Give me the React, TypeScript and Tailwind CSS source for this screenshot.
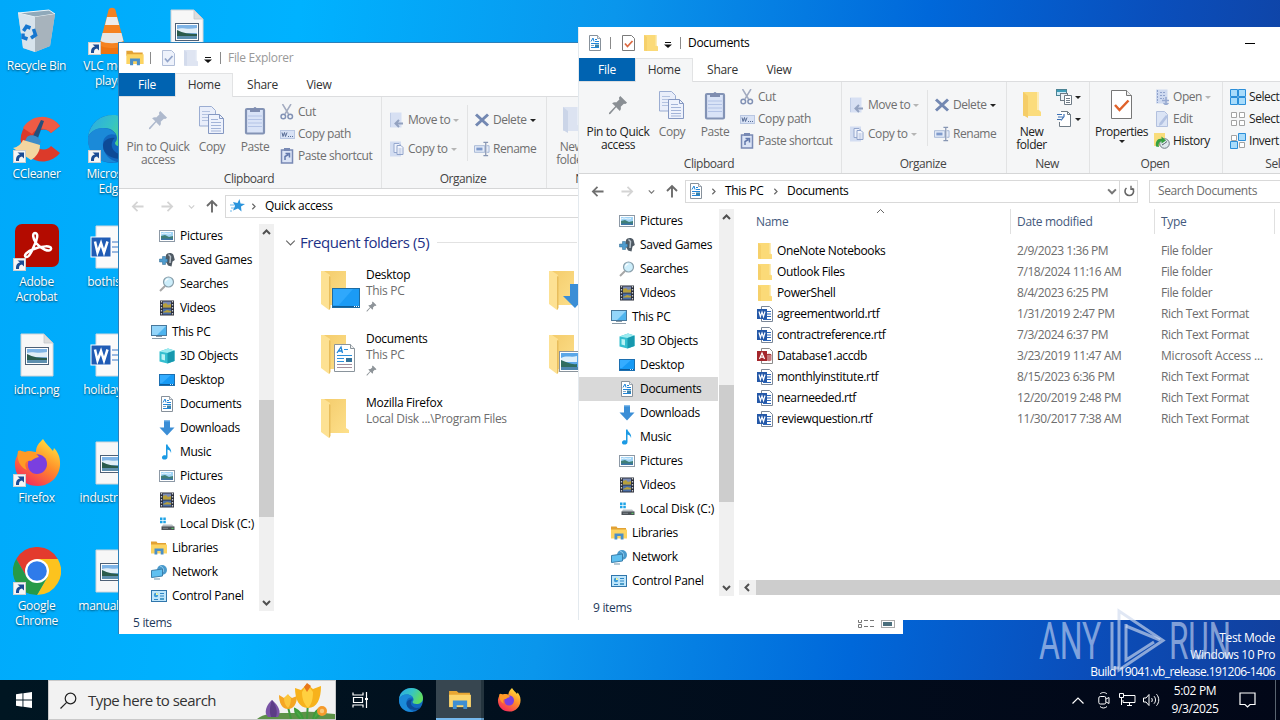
import type { ReactNode } from 'react'

type IconProps = { className?: string }

/* ── Small icons (16px grid) ── */

function PictureIcon() {
  return (
    <svg width="16" height="16" viewBox="0 0 16 16">
      <rect x=".5" y="2.500" width="15" height="11" fill="#fff" stroke="#8d99a6" />
      <rect x="2" y="4" width="12" height="8" fill="#9fd3f5" />
      <path d="M2 8l4-1 4 2 4-1v4H2z" fill="#3f7f78" />
      <path d="M2 10.500h12V12H2z" fill="#3d75a8" />
      <path d="M2 6l3-1 4 1 3-.5" stroke="#e9f6ff" fill="none" />
    </svg>
  )
}

function GamesIcon() {
  return (
    <svg width="16" height="16" viewBox="0 0 16 16">
      <path d="M7 3c1-2.500 6-2.800 7.500 0L15.800 8l-2.300 1.500-1 5-3.500-1L6.500 9z" fill="#4f5a64" />
      <path d="M9.500 2.500l2 2-.5 6.500" stroke="#b8c3cc" strokeWidth="1.500" fill="none" />
      <path d="M3.500 4.500h3v2.500H8.500v3H6.500v2.500h-3v-2.500H.5V7h3z" fill="#4f9cce" stroke="#2c668f" strokeWidth=".5" />
    </svg>
  )
}

function SearchesIcon() {
  return (
    <svg width="16" height="16" viewBox="0 0 16 16">
      <path d="M6 10l-5 5" stroke="#a7a7a7" strokeWidth="2" />
      <circle cx="9.500" cy="6" r="5" fill="#cdeefb" stroke="#8aa0ac" strokeWidth="1.200" />
      <path d="M6.500 5.500a3 3 0 0 1 3-2.500" stroke="#fff" strokeWidth="1.200" fill="none" />
    </svg>
  )
}

function VideoIcon() {
  return (
    <svg width="16" height="16" viewBox="0 0 16 16">
      <rect x="1" y=".5" width="14" height="15" fill="#2b2f3a" />
      <path d="M2.500 1v14M13.500 1v14" stroke="#c9ccd2" strokeWidth="1.300" strokeDasharray="1.500 1.500" />
      <rect x="4" y="1.500" width="8" height="6" fill="#7b8bb5" />
      <rect x="4" y="8.500" width="8" height="6" fill="#4a6fa8" />
      <path d="M4 4l3-1 2 2 3-1v3.500H4zM4 12l4-2 4 1v1.500H4z" fill="#b7a03c" />
    </svg>
  )
}

function PcIcon() {
  return (
    <svg width="16" height="16" viewBox="0 0 16 16">
      <rect x=".5" y="1.500" width="15" height="10" fill="#4fb4ee" stroke="#48789c" />
      <path d="M1 2h14L6 11H1z" fill="#93d5fa" />
      <path d="M5 12.500h6M1 14.500h14" stroke="#8a9ba8" />
    </svg>
  )
}

function ObjectsIcon() {
  return (
    <svg width="16" height="16" viewBox="0 0 16 16">
      <path d="M.5 3.500L9 .5l6.500 2v10.500l-7 2.500-8-2z" fill="#35bfd0" />
      <path d="M.5 3.500L9 .5l6.500 2-7 2.500z" fill="#9bebf0" />
      <path d="M8.500 5l7-2.500V13l-7 2.500z" fill="#1698ae" />
      <path d="M2.500 6l3.500.5v6l-3.500-1z" fill="#b9f3f5" />
    </svg>
  )
}

function DesktopIcon() {
  return (
    <svg width="16" height="16" viewBox="0 0 16 16">
      <rect x=".5" y="2.500" width="15" height="11" fill="#169af5" stroke="#1c6fb0" />
      <path d="M1 3h11l-9 8H1z" fill="#35adff" />
      <path d="M1 12.500h14" stroke="#0c5c9c" />
      <path d="M11 12.500h3" stroke="#cfeaff" strokeDasharray="1 1" />
    </svg>
  )
}

function DocumentIcon() {
  return (
    <svg width="16" height="16" viewBox="0 0 16 16">
      <path d="M2.500.5h8l3 3v12h-11z" fill="#fff" stroke="#87919b" />
      <path d="M10.500.5v3h3" fill="#e8ecef" stroke="#87919b" strokeWidth=".8" />
      <path d="M4 6.500L6 3l1 3.500M8 4.500h2M8 6.500h4M4 8.500h8M4 12.500h8" stroke="#2386d8" fill="none" />
      <path d="M4 10.500h3" stroke="#7fa7c8" />
      <rect x="8" y="9.500" width="4" height="2.500" fill="#3b82a8" />
    </svg>
  )
}

function DownloadIcon() {
  return (
    <svg width="16" height="16" viewBox="0 0 16 16">
      <path d="M5 .5h6v7h4.500L8 15.500.5 7.500H5z" fill="#3b8ed6" />
      <path d="M5 .5h6v1H5z" fill="#6db0e8" />
    </svg>
  )
}

function MusicIcon() {
  return (
    <svg width="16" height="16" viewBox="0 0 16 16">
      <path d="M7 .5h1.500c.5 3 4.500 4 3.500 8.500-.3-2-1.500-3-3.500-3.500V13c0 3.500-6 3.200-5.500.3C3.300 11.300 5.500 11 7 11.500z" fill="#1b9ae4" />
    </svg>
  )
}

function DiskIcon() {
  return (
    <svg width="16" height="16" viewBox="0 0 16 16">
      <path d="M1 1.500h2.500V4H1zM4.300 1.500h2.500V4H4.300zM1 4.800h2.500v2.500H1zM4.300 4.800h2.500v2.500H4.300z" fill="#1fa3e6" />
      <path d="M4 8.500h9l2.500 2.500H2.500z" fill="#b9bfc4" />
      <rect x="2.500" y="10.500" width="13" height="3.500" fill="#4c5257" />
      <path d="M4 12.300h5" stroke="#7d848a" />
      <path d="M12.500 12.300h2" stroke="#5ee06a" />
    </svg>
  )
}

function LibrariesIcon({ className }: IconProps) {
  return (
    <svg width="16" height="16" viewBox="0 0 16 16" className={className}>
      <path d="M0 1.500h5.500l1 1.500H15v3H0z" fill="#e2a234" />
      <path d="M0 4.500h16v9H0z" fill="#fcd462" />
      <path d="M3.500 14.500v-6h9v6h-2.800V11H6.300v3.500z" fill="#4a8fc8" />
    </svg>
  )
}

function NetworkIcon() {
  return (
    <svg width="16" height="16" viewBox="0 0 16 16">
      <circle cx="11" cy="6" r="5" fill="#4a9acc" />
      <path d="M9 2c3 1 4 3 3 6" stroke="#a7dcf7" fill="none" strokeWidth=".8" />
      <path d="M.5 6.500l11-1.500v7l-11 1.500z" fill="#5fc0f0" stroke="#3b7eaa" />
      <path d="M3 15h6" stroke="#6f94ab" />
    </svg>
  )
}

function ControlPanelIcon() {
  return (
    <svg width="16" height="16" viewBox="0 0 16 16">
      <rect x=".5" y="2.500" width="15" height="11" fill="#bfe6fb" stroke="#3076ac" />
      <circle cx="5" cy="7" r="2.200" fill="#3d9cd8" />
      <path d="M5 7V4.800A2.200 2.200 0 0 1 7.200 7z" fill="#f3f6a0" />
      <path d="M9 5.500h4M9 8h4M3 11.500h4" stroke="#2f86c4" />
      <rect x="9" y="10" width="4" height="2" fill="#4b9cc8" />
    </svg>
  )
}

function FolderIcon({ pale = false }: { pale?: boolean }) {
  return (
    <svg width="16" height="18" viewBox="0 0 16 18">
      <path d="M1 1h12.500v10.500l1.500 1V17H1z" fill={pale ? '#dfe5f2' : '#fbda78'} />
      <path d="M1 1l3 2v14l-3-1z" fill={pale ? '#d3dbec' : '#f6d06a'} />
      <path d="M12.500 1h1v11h-1z" fill={pale ? '#e6ebf5' : '#fce9ad'} />
    </svg>
  )
}

function WordFileIcon() {
  return (
    <svg width="17" height="16" viewBox="0 0 17 16">
      <path d="M4.500.5h8l3 3v12h-11z" fill="#fff" stroke="#7b8797" />
      <path d="M10 5.500h4M10 8h4M10 10.500h4M6 13.500h8" stroke="#2b65b8" />
      <rect y="3" width="10" height="10" fill="#2458a8" />
      <path d="M2 5.500l1.400 5L5 6l1.500 4.500 1.500-5" stroke="#fff" strokeWidth="1.200" fill="none" />
    </svg>
  )
}

function AccessFileIcon() {
  return (
    <svg width="17" height="16" viewBox="0 0 17 16">
      <path d="M4.500.5h8l3 3v12h-11z" fill="#fff" stroke="#8b8b8b" />
      <ellipse cx="12" cy="7" rx="2.500" ry="1.200" fill="#a4373a" />
      <path d="M9.500 7v5c0 1.500 5 1.500 5 0V7" fill="#c5777a" />
      <rect y="3" width="10" height="10" fill="#a4262c" />
      <path d="M2.500 11L5 5l2.500 6M3.500 9.200h3" stroke="#fff" strokeWidth="1.200" fill="none" />
    </svg>
  )
}

/* ── Ribbon icons ── */

function PinIcon({ size, color }: { size: number; color: string }) {
  return (
    <svg width={size} height={size} viewBox="0 0 22 22">
      <path d="M13.500 1l7.500 7.500-2 1.500-1.500-.5-3.500 3.500c.5 2 0 3.500-1 4.500L9 13.500 2.500 21 1 21.200 1.200 19.500 8 12.500 4.500 9c1.500-1 3-1.300 4.500-.8L12.500 5 12 3z" fill={color} />
    </svg>
  )
}

function CopyIcon() {
  return (
    <svg width="26" height="30" viewBox="0 0 26 30">
      <path d="M.5 1.500h12l4 4V21H.5z" fill="#e9eefa" stroke="#9badd2" />
      <path d="M3 6.500h8M3 9.500h11M3 12.500h11M3 15.500h11" stroke="#b3c2e0" />
      <path d="M9.500 9.500h11l4 4v15h-15z" fill="#eef2fc" stroke="#8598c2" />
      <path d="M20.500 9.500v4h4" fill="none" stroke="#8598c2" />
      <path d="M12 14.500h7M12 17.500h10M12 20.500h10M12 23.500h10M12 26h10" stroke="#a3b4d8" />
    </svg>
  )
}

function PasteIcon() {
  return (
    <svg width="22" height="30" viewBox="0 0 22 30">
      <rect x="2" y="4" width="18" height="24.500" rx="1" fill="#d9e3f7" stroke="#8393b5" strokeWidth="2.200" />
      <path d="M6 7V3.500h3.500a1.500 1.500 0 0 1 3 0H16V7z" fill="#7f8db0" />
      <path d="M4 11h14M4 14.500h14M4 18h14M4 21.500h14" stroke="#b3c3e6" />
    </svg>
  )
}

function CutIcon() {
  return (
    <svg width="16" height="16" viewBox="0 0 16 16" fill="none">
      <path d="M3.500 0l6 10M12 0L6 10" stroke="#a3abc0" strokeWidth="1.500" />
      <circle cx="4.300" cy="12.500" r="2.300" stroke="#8292b5" strokeWidth="1.500" />
      <circle cx="11.200" cy="12.500" r="2.300" stroke="#8292b5" strokeWidth="1.500" />
    </svg>
  )
}

function CopyPathIcon() {
  return (
    <svg width="15" height="9" viewBox="0 0 15 9">
      <rect x=".5" y=".5" width="14" height="8" fill="#d8e2f5" stroke="#b9c7e2" />
      <path d="M2 2.500l1 4 1.500-4 1 4 1.500-4M8 6.500h1M10 6.500h1M12 6.500h1" stroke="#586d96" fill="none" />
    </svg>
  )
}

function PasteShortcutIcon() {
  return (
    <svg width="16" height="16" viewBox="0 0 16 16">
      <rect x="2.500" y="2" width="11" height="13" fill="#dbe4f6" stroke="#7889b4" strokeWidth="1.500" />
      <rect x="5" y="0" width="6" height="3" fill="#7889b4" />
      <path d="M6 12V8.500l3.500-2M6.500 5.500h4v4" stroke="#6278ac" strokeWidth="1.500" fill="none" />
    </svg>
  )
}

function MoveToIcon() {
  return (
    <svg width="16" height="16" viewBox="0 0 16 16">
      <path d="M1 .5h11.500v15H1z" fill="#d7e0f3" />
      <path d="M1.500 1v14" stroke="#c0cde6" />
      <path d="M14 11.500H7M10 8l-3.500 3.500L10 15" stroke="#93a2c0" strokeWidth="2" fill="none" />
    </svg>
  )
}

function CopyToIcon() {
  return (
    <svg width="16" height="16" viewBox="0 0 16 16">
      <path d="M1 .5h11v15H1z" fill="#d3ddf1" />
      <path d="M5 2.500h5l1 1v8H5z" fill="#eef2fb" stroke="#96a8ce" />
      <path d="M8 4.500h4l2 2v7H8z" fill="#f3f6fd" stroke="#8fa2ca" />
      <path d="M9.500 8h3M9.500 10h3M9.500 12h3" stroke="#aab9da" />
    </svg>
  )
}

function DeleteIcon() {
  return (
    <svg width="16" height="16" viewBox="0 0 16 16">
      <path d="M2 2.500l12 11M14 2.500l-12 11" stroke="#7388b2" strokeWidth="3" />
    </svg>
  )
}

function RenameIcon() {
  return (
    <svg width="17" height="16" viewBox="0 0 17 16">
      <path d="M.5 4.500h11v7H.5zM13.500 4.500h2.500v7h-2.500" fill="#e4ebf8" stroke="#a4b5d4" />
      <rect x="2.500" y="6.500" width="6.500" height="3" fill="#7e9acb" />
      <path d="M10 1h5M12.500 1v14M10 15h5" stroke="#8796b3" strokeWidth="1.300" />
    </svg>
  )
}

function NewItemIcon({ muted }: { muted: boolean }) {
  const line = muted ? '#b6c2da' : '#6f7b86'
  return (
    <svg width="16" height="16" viewBox="0 0 16 16">
      <rect x=".5" y=".5" width="10" height="6" fill="#cfeaf7" stroke="#4d8394" />
      <path d="M1 2h9" stroke="#3e9db8" strokeWidth="2" />
      <rect x="4.500" y="4.500" width="7" height="7" fill="#eef3f6" stroke={line} />
      <path d="M8.500 6.500h7v9h-7z" fill="#fff" stroke={line} />
      <path d="M10 9.500h4M10 11.500h4M10 13.500h4" stroke={line} />
    </svg>
  )
}

function EasyAccessIcon() {
  return (
    <svg width="16" height="16" viewBox="0 0 16 16">
      <path d="M4 .5h8l2.500 3v12H4z" fill="#fff" />
      <path d="M5 .5h6.500l3 3v12h-11V11" fill="none" stroke="#6f7b86" />
      <path d="M11.500.5v3h3" fill="none" stroke="#6f7b86" />
      <path d="M1 8.500h4M2 6h5M1 3.500h5M8 3v2.500l-3 4" stroke="#3c70b4" strokeWidth="1.200" fill="none" />
    </svg>
  )
}

function PropertiesIcon() {
  return (
    <svg width="21" height="29" viewBox="0 0 21 29">
      <path d="M.5.500h15l5 5v23H.5z" fill="#fff" stroke="#777" />
      <path d="M15.500.5v5h5" fill="#eee" stroke="#777" />
      <path d="M4 15l4.500 5L17.500 10.500" stroke="#e0622a" strokeWidth="2.500" fill="none" />
    </svg>
  )
}

function OpenIcon() {
  return (
    <svg width="16" height="16" viewBox="0 0 16 16">
      <rect x="2" y=".5" width="11.500" height="14" fill="#cfdaf0" />
      <path d="M3.500 1v13M6 3.500h5M6 6.500h5M6 9.500h4" stroke="#8fa2cb" strokeDasharray="2 1" />
      <path d="M8 11.500h7M12 8v7.500M9.500 14l2.500 2 2.500-2" stroke="#96a9d0" strokeWidth="1.500" fill="none" />
    </svg>
  )
}

function EditIcon() {
  return (
    <svg width="16" height="16" viewBox="0 0 16 16">
      <path d="M2.500.5h8l3 3v12h-11z" fill="#dbe4f5" stroke="#b2c0de" />
      <path d="M14 5.500L8 13.500l-3 1.500.5-3L12 4z" fill="#b3c2e2" />
    </svg>
  )
}

function HistoryIcon() {
  return (
    <svg width="16" height="16" viewBox="0 0 16 16">
      <path d="M0 0h11v13H0z" fill="#f9dd7b" />
      <circle cx="10.500" cy="10.500" r="4.800" fill="#dfe9ed" stroke="#6d7b84" />
      <path d="M8 12l2.500-1.500L13 8.500" stroke="#546068" fill="none" />
      <path d="M2 13.500c-1-5 2-8.500 5.500-7.500V3.500l4.500 4-4.500 3V8.500c-2 0-3.500 2-2.500 5.500z" fill="#35a041" />
    </svg>
  )
}

function SelectIcon({ kind }: { kind: 'all' | 'none' | 'invert' }) {
  const on = { fill: '#a9dcfb', stroke: '#2c8fd9' }
  const off = { fill: '#fff', stroke: '#a3a3a3' }
  if (kind === 'all') {
    return (
      <svg width="16" height="16" viewBox="0 0 16 16">
        <path d="M.5.500h7v7h-7zM8.500.500h7v7h-7zM.5 8.500h7v7h-7zM8.500 8.500h7v7h-7z" {...on} />
      </svg>
    )
  }
  if (kind === 'none') {
    return (
      <svg width="16" height="16" viewBox="0 0 16 16">
        <path d="M1.500 1.500h5v5h-5zM9.500 1.500h5v5h-5zM1.500 9.500h5v5h-5zM9.500 9.500h5v5h-5z" {...off} />
      </svg>
    )
  }
  return (
    <svg width="16" height="16" viewBox="0 0 16 16">
      <path d="M1.500 2.500h5v5h-5zM9.500 9.500h5v5h-5z" {...off} />
      <path d="M8.500.500h7v7h-7zM.5 8.500h7v7h-7z" {...on} />
    </svg>
  )
}

function Caret({ color = '#222' }: { color?: string }) {
  return (
    <svg width="6" height="3" viewBox="0 0 6 3" className="shrink-0">
      <path d="M0 0h6L3 3z" fill={color} />
    </svg>
  )
}

function Chevron({ dir, color, size = 8, weight = 1.5 }: { dir: 'up' | 'down' | 'left' | 'right'; color: string; size?: number; weight?: number }) {
  const paths = { up: 'M1 6l3.500-3.500L8 6', down: 'M1 3l3.500 3.500L8 3', left: 'M6 1L2.500 4.500 6 8', right: 'M3 1l3.500 3.500L3 8' }
  return (
    <svg width={size} height={size} viewBox="0 0 9 9" className="shrink-0">
      <path d={paths[dir]} stroke={color} strokeWidth={weight} fill="none" />
    </svg>
  )
}

/* ── Ribbon ── */

function BigButton({ icon, lines, className, enabled = false, caret = false }: { icon: ReactNode; lines: string[]; className: string; enabled?: boolean; caret?: boolean }) {
  return (
    <div className={`flex shrink-0 flex-col items-center ${className} ${enabled ? 'text-[#222]' : 'text-[#6f6f6f]'}`}>
      <div className="flex h-[43px] items-center justify-center pt-[2px]">{icon}</div>
      {lines.map((line) => (
        <div key={line} className="h-[13px] leading-[13px] whitespace-nowrap">{line}</div>
      ))}
      {caret && <div className="pt-[2px]"><Caret /></div>}
    </div>
  )
}

function SmallButton({ icon, label, caret, enabled = false }: { icon: ReactNode; label?: string; caret?: string; enabled?: boolean }) {
  return (
    <div className={`flex h-[22px] items-center gap-[3px] whitespace-nowrap ${enabled ? 'text-[#222]' : 'text-[#6f6f6f]'}`}>
      <span className="flex w-4 shrink-0 justify-center">{icon}</span>
      {label && <span>{label}</span>}
      {caret && <Caret color={caret} />}
    </div>
  )
}

function Group({ label, className, children }: { label: string; className: string; children: ReactNode }) {
  return (
    <div className={`flex shrink-0 flex-col border-r border-[#e2e3e4] ${className}`}>
      <div className="flex h-[73px]">{children}</div>
      <div className="h-[18px] pr-[2px] text-center leading-[18px] text-[#444]">{label}</div>
    </div>
  )
}

function Ribbon({ active }: { active: boolean }) {
  return (
    <div className="flex h-[92px] shrink-0 overflow-hidden border-b border-[#d5d6d7] bg-[#f5f6f7] tracking-[-0.45px]">
      <Group label="Clipboard" className="w-[263px]">
        <BigButton className="ml-[2px] w-[74px] tracking-[-0.35px]" enabled={active} lines={['Pin to Quick', 'access']} icon={<PinIcon size={20} color={active ? '#8a8f94' : '#aeb9cd'} />} />
        <BigButton className="w-[34px]" lines={['Copy']} icon={<CopyIcon />} />
        <BigButton className="ml-[2px] w-[48px]" lines={['Paste']} icon={<PasteIcon />} />
        <div className="flex flex-col pt-1">
          <SmallButton icon={<CutIcon />} label="Cut" />
          <SmallButton icon={<CopyPathIcon />} label="Copy path" />
          <SmallButton icon={<PasteShortcutIcon />} label="Paste shortcut" />
        </div>
      </Group>
      <Group label="Organize" className="w-[165px]">
        <div className="flex w-[85px] flex-col gap-[7px] pt-3 pl-[7px]">
          <SmallButton icon={<MoveToIcon />} label="Move to" caret="#b5b5b5" />
          <SmallButton icon={<CopyToIcon />} label="Copy to" caret="#b5b5b5" />
        </div>
        <div className="mt-2 h-[56px] w-px bg-[#e2e3e4]" />
        <div className="flex flex-col gap-[7px] pt-3 pl-[6px]">
          <SmallButton icon={<DeleteIcon />} label="Delete" caret="#222" />
          <SmallButton icon={<RenameIcon />} label="Rename" />
        </div>
      </Group>
      <Group label="New" className="w-[83px]">
        <BigButton className="w-[49px]" enabled={active} lines={['New', 'folder']} icon={
          <svg width="20" height="28" viewBox="0 0 20 28">
            <path d="M1 1h16v18l2 2v4H1z" fill={active ? '#fbdc7c' : '#dce3f1'} />
            <path d="M1 1l5 4v22l-5-3z" fill={active ? '#f5cd68' : '#cbd5e8'} />
            <path d="M15 1h2v18h-2z" fill={active ? '#fdecb5' : '#e7ecf6'} />
          </svg>
        } />
        <div className="flex flex-col pt-1">
          <SmallButton icon={<NewItemIcon muted={!active} />} caret="#222" enabled />
          <SmallButton icon={<EasyAccessIcon />} caret="#222" enabled />
        </div>
      </Group>
      {active && (
        <>
          <Group label="Open" className="w-[133px]">
            <BigButton className="w-[63px] tracking-[-0.5px]" enabled caret lines={['Properties']} icon={<PropertiesIcon />} />
            <div className="flex flex-col pt-1 pl-px">
              <SmallButton icon={<OpenIcon />} label="Open" caret="#b5b5b5" />
              <SmallButton icon={<EditIcon />} label="Edit" />
              <SmallButton icon={<HistoryIcon />} label="History" enabled />
            </div>
          </Group>
          <Group label="Select" className="w-[118px]">
            <div className="flex flex-col pt-1 pl-[7px]">
              <SmallButton icon={<SelectIcon kind="all" />} label="Select all" enabled />
              <SmallButton icon={<SelectIcon kind="none" />} label="Select none" enabled />
              <SmallButton icon={<SelectIcon kind="invert" />} label="Invert selection" enabled />
            </div>
          </Group>
        </>
      )}
    </div>
  )
}

/* ── Window chrome ── */

function TitleBar({ title, active }: { title: string; active: boolean }) {
  return (
    <div className="flex h-[30px] shrink-0 items-center bg-white pl-2">
      {active ? <DocumentIcon /> : <LibrariesIcon className="scale-110" />}
      <div className="ml-[7px] h-3 w-px bg-[#8a8a8a]" />
      <svg width="13" height="16" viewBox="0 0 13 16" className="ml-[11px]">
        <path d="M.5.500h9l3 3v12H.5z" fill={active ? '#fff' : '#eef2fb'} stroke={active ? '#7a7a7a' : '#b1bed8'} />
        <path d="M3 8.500l2.500 3L10.500 6" stroke={active ? '#dc6a42' : '#93a5ca'} strokeWidth="1.800" fill="none" />
      </svg>
      <div className="ml-2"><FolderIcon pale={!active} /></div>
      <svg width="8" height="6" viewBox="0 0 8 6" className="mt-[3px] ml-[5px]">
        <path d="M1 .5h6" stroke="#111" />
        <path d="M0 2.500h8L4 6z" fill="#111" />
      </svg>
      <div className="ml-[8px] h-3 w-px bg-[#8a8a8a]" />
      <span className={`ml-[7px] w-[65px] whitespace-nowrap ${active ? 'text-black' : 'text-[#999]'}`}>{title}</span>
      {active && <div className="ml-[492px] h-px w-[10px] bg-black" />}
    </div>
  )
}

function Tabs() {
  return (
    <div className="flex h-[24px] shrink-0 border-b border-[#dcdddf] bg-white text-center leading-[24px] text-[#333]">
      <div className="h-[23px] w-[56px] bg-[#0063b1] text-white">File</div>
      <div className="-mb-px h-[24px] w-[58px] border-x border-t border-[#e2e3e4] bg-[#f5f6f7] leading-[22px]">Home</div>
      <div className="w-[59px]">Share</div>
      <div className="w-[54px]">View</div>
    </div>
  )
}

function Arrow({ className, color, size = 14 }: { className?: string; color: string; size?: number }) {
  return (
    <svg width={size} height={size} viewBox="0 0 14 14" className={className}>
      <path d="M13.500 7H2M7 2L2 7l5 5" stroke={color} strokeWidth="1.900" fill="none" />
    </svg>
  )
}

function NavButtons({ active }: { active: boolean }) {
  return (
    <div className="flex w-[106px] items-center pl-[12px]">
      <Arrow color={active ? '#6f6f6f' : '#d4d4d4'} size={13} />
      <Arrow className="ml-[17px] rotate-180" color="#d4d4d4" size={13} />
      <span className="ml-[14px]"><Chevron dir="down" color={active ? '#777' : '#d0d0d0'} size={7} /></span>
      <Arrow className="ml-[10px] rotate-90" color="#6b6b6b" />
    </div>
  )
}

const tree = [
  { label: 'Pictures', icon: <PictureIcon />, level: 2 },
  { label: 'Saved Games', icon: <GamesIcon />, level: 2 },
  { label: 'Searches', icon: <SearchesIcon />, level: 2 },
  { label: 'Videos', icon: <VideoIcon />, level: 2 },
  { label: 'This PC', icon: <PcIcon />, level: 1 },
  { label: '3D Objects', icon: <ObjectsIcon />, level: 2 },
  { label: 'Desktop', icon: <DesktopIcon />, level: 2 },
  { label: 'Documents', icon: <DocumentIcon />, level: 2 },
  { label: 'Downloads', icon: <DownloadIcon />, level: 2 },
  { label: 'Music', icon: <MusicIcon />, level: 2 },
  { label: 'Pictures', icon: <PictureIcon />, level: 2 },
  { label: 'Videos', icon: <VideoIcon />, level: 2 },
  { label: 'Local Disk (C:)', icon: <DiskIcon />, level: 2 },
  { label: 'Libraries', icon: <LibrariesIcon />, level: 1 },
  { label: 'Network', icon: <NetworkIcon />, level: 1 },
  { label: 'Control Panel', icon: <ControlPanelIcon />, level: 1 },
]

function NavPane({ selected }: { selected?: string }) {
  return (
    <div className="flex h-[387px] shrink-0">
      <div className="w-[140px] overflow-hidden">
        {tree.map((item, i) => (
          <div key={i} className={`flex h-6 w-[139px] items-center gap-[5px] whitespace-nowrap text-black ${item.level === 2 ? 'pl-10' : 'pl-8'} ${item.label === selected ? 'bg-[#d9d9d9]' : ''}`}>
            <span className="shrink-0">{item.icon}</span>
            <span className={item.label.includes('(C:)') ? 'tracking-[-0.18px]' : ''}>{item.label}</span>
          </div>
        ))}
      </div>
      <div className="flex w-[15px] flex-col items-center bg-[#f0f0f0]">
        <div className="flex h-[17px] items-center"><Chevron dir="up" color="#505050" size={9} weight={2} /></div>
        <div className="mt-[159px] h-[117px] w-full bg-[#cdcdcd]" />
        <div className="mt-auto flex h-[17px] items-center"><Chevron dir="down" color="#505050" size={9} weight={2} /></div>
      </div>
    </div>
  )
}

/* ── Quick access window ── */

function TileFolder({ overlay }: { overlay?: 'desktop' | 'document' | 'download' | 'picture' }) {
  return (
    <svg width="45" height="48" viewBox="0 0 45 48" className="shrink-0">
      <defs>
        <linearGradient id="tileFront" x1="0" y1="0" x2="1" y2="1">
          <stop offset="0" stopColor="#f4cc6c" />
          <stop offset="1" stopColor="#fde08c" />
        </linearGradient>
      </defs>
      <path d="M3 4h22v29l3 2v3H3z" fill="url(#tileFront)" />
      <path d="M0 4h3l6 4v34l-1 1-8-6z" fill="#fde193" />
      <path d="M8 9l1.500 1v31L8 43z" fill="#e8bd5c" />
      {overlay === 'desktop' && (
        <g>
          <rect x="11.500" y="21.500" width="27" height="19" fill="#1b9bf5" stroke="#1d6ca3" />
          <path d="M12 22h20L18 38h-6z" fill="#2fa8fc" />
          <path d="M12 39.500h26" stroke="#0f5d98" />
          <path d="M33 39.500h5" stroke="#fff" strokeDasharray="1 1" />
        </g>
      )}
      {overlay === 'document' && (
        <g>
          <path d="M13.500 13.500h16l4 4v23h-20z" fill="#fff" stroke="#8a949c" />
          <path d="M29.500 13.500v4h4" fill="#eee" stroke="#8a949c" />
          <path d="M16 22l4-6 1.500 6M17.500 20h4" stroke="#1d84d6" strokeWidth="1.300" fill="none" />
          <path d="M23 18.500h4M16 24.500h15M16 27.500h7M16 30.500h7" stroke="#2c8fdc" />
          <path d="M16 33.500h15M16 36.500h15" stroke="#a58f9d" />
          <rect x="25" y="27" width="6" height="4" fill="#33729a" />
        </g>
      )}
      {overlay === 'download' && <path d="M21 17h10v12h6L26 41 14 29h7z" fill="#3b8ed6" />}
      {overlay === 'picture' && (
        <g>
          <rect x="10.500" y="20.500" width="28" height="20" fill="#fff" stroke="#8a949c" />
          <rect x="12" y="22" width="25" height="17" fill="#5aa7e8" />
          <path d="M12 27c6-3 10 0 16-2v6H12z" fill="#dff0fa" />
          <path d="M12 29c6 2 10 5 16 4v6H12z" fill="#2f6d5f" />
          <path d="M12 36h25v3H12z" fill="#4c86ae" />
        </g>
      )}
    </svg>
  )
}

const tiles = [
  { name: 'Desktop', path: 'This PC', overlay: 'desktop', pinned: true },
  { name: 'Downloads', path: 'This PC', overlay: 'download', pinned: true },
  { name: 'Documents', path: 'This PC', overlay: 'document', pinned: true },
  { name: 'Pictures', path: 'This PC', overlay: 'picture', pinned: true },
  { name: 'Mozilla Firefox', path: 'Local Disk ...\\Program Files', overlay: undefined, pinned: false },
] as const

function QuickAccessWindow() {
  return (
    <div className="absolute top-[42px] left-[118px] flex h-[592px] w-[785px] flex-col border-t border-l border-[#2d7fb8] bg-white">
      <TitleBar title="File Explorer" active={false} />
      <Tabs />
      <Ribbon active={false} />
      <div className="flex h-[35px] shrink-0 items-center pb-[1px]">
        <NavButtons active={false} />
        <div className="flex h-[23px] flex-1 items-center border border-[#d9d9d9] pl-[4px] text-black">
          <svg width="16" height="16" viewBox="0 0 16 16">
            <path d="M9.500 1l1 4.500 4.500.5-4 2.500.5 5-3.500-3-5 2 2-4.500L3 4l4.500 1z" fill="#2a94dc" />
            <path d="M0 7h4M1 10h3M0 13h2" stroke="#6fb8ea" />
          </svg>
          <span className="ml-[4px]"><Chevron dir="right" color="#666" size={7} /></span>
          <span className="ml-[8px]">Quick access</span>
        </div>
      </div>
      <div className="flex h-[387px]">
        <NavPane />
        <div className="w-[460px] pt-[6px] pl-[11px]">
          <div className="flex h-6 items-center">
            <Chevron dir="down" color="#666" size={11} weight={0.9} />
            <span className="ml-[4px] text-[15px] tracking-[-0.42px] text-[#1e3287]">Frequent folders (5)</span>
            <div className="ml-2 h-px w-[140px] bg-[#e2e2e2]" />
          </div>
          <div className="grid grid-cols-[228px_228px] pt-[13px] pl-[36px]">
            {tiles.map((t) => (
              <div key={t.name} className="flex h-16">
                <TileFolder overlay={t.overlay} />
                <div className="leading-4 whitespace-nowrap text-[#6d6d6d]">
                  <div className="text-black">{t.name}</div>
                  <div>{t.path}</div>
                  {t.pinned && <div className="pt-[2px]"><PinIcon size={11} color="#8e9499" /></div>}
                </div>
              </div>
            ))}
          </div>
        </div>
      </div>
      <div className="flex flex-1 items-center pr-[8px] pl-[14px] text-[#1e395b]">
        <span>5 items</span>
        <svg width="16" height="9" viewBox="0 0 16 9" className="mt-[2px] ml-auto">
          <path d="M.5.500h3v3h-3zM.5 5.500h3v3h-3z" stroke="#777" fill="none" />
          <path d="M6 1.500h4M6 7.500h4M12 1.500h4M12 7.500h4" stroke="#777" />
        </svg>
        <svg width="14" height="8" viewBox="0 0 14 8" className="mt-[2px] ml-[7px]">
          <rect x=".5" y=".5" width="13" height="7" fill="#fff" stroke="#aaa" />
          <rect x="2" y="2" width="9" height="4" fill="#4b6f7d" />
        </svg>
      </div>
    </div>
  )
}

/* ── Documents window ── */

const files = [
  { name: 'OneNote Notebooks', date: '2/9/2023 1:36 PM', type: 'File folder', kind: 'folder' },
  { name: 'Outlook Files', date: '7/18/2024 11:16 AM', type: 'File folder', kind: 'folder' },
  { name: 'PowerShell', date: '8/4/2023 6:25 PM', type: 'File folder', kind: 'folder' },
  { name: 'agreementworld.rtf', date: '1/31/2019 2:47 PM', type: 'Rich Text Format', kind: 'word' },
  { name: 'contractreference.rtf', date: '7/3/2024 6:37 PM', type: 'Rich Text Format', kind: 'word' },
  { name: 'Database1.accdb', date: '3/23/2019 11:47 AM', type: 'Microsoft Access ...', kind: 'access' },
  { name: 'monthlyinstitute.rtf', date: '8/15/2023 6:36 PM', type: 'Rich Text Format', kind: 'word' },
  { name: 'nearneeded.rtf', date: '12/20/2019 2:48 PM', type: 'Rich Text Format', kind: 'word' },
  { name: 'reviewquestion.rtf', date: '11/30/2017 7:38 AM', type: 'Rich Text Format', kind: 'word' },
]

function DocumentsWindow() {
  return (
    <div className="absolute top-[27px] left-[578px] flex h-[593px] w-[784px] flex-col border-t border-l border-t-white border-l-[#e3e9ee] bg-white">
      <TitleBar title="Documents" active />
      <Tabs />
      <Ribbon active />
      <div className="flex h-[35px] shrink-0 items-center pb-[1px]">
        <NavButtons active />
        <div className="flex h-[23px] w-[453px] items-center border border-[#d9d9d9] pl-[2px] text-black">
          <DocumentIcon />
          <span className="ml-[6px]"><Chevron dir="right" color="#666" size={7} /></span>
          <span className="ml-[8px] w-[39px] whitespace-nowrap">This PC</span>
          <span className="ml-[8px]"><Chevron dir="right" color="#666" size={7} /></span>
          <span className="ml-[8px]">Documents</span>
          <span className="mr-[2px] ml-auto"><Chevron dir="down" color="#777" size={10} weight={1.8} /></span>
          <div className="flex h-full w-[18px] items-center justify-center border-l border-[#d9d9d9]">
            <svg width="12" height="12" viewBox="0 0 12 12">
              <path d="M9.300 3.200A4.300 4.300 0 1 1 3.500 3" stroke="#666" strokeWidth="1.600" fill="none" />
              <path d="M4 .8v3.500H.8" stroke="#666" strokeWidth="1.400" fill="none" transform="matrix(-1 0 0 1 12 0)" />
            </svg>
          </div>
        </div>
        <div className="ml-[11px] flex h-[23px] w-[200px] items-center border border-[#d9d9d9] pl-2 tracking-[-0.4px] text-[#6d6d6d]">Search Documents</div>
      </div>
      <div className="flex h-[387px]">
        <NavPane selected="Documents" />
        <div className="flex w-[628px] flex-col pl-[5px]">
          <div className="flex h-[25px] shrink-0 leading-[26px] text-[#43597d]">
            <div className="relative w-[272px] border-r border-[#e0e0e0] pl-[17px]">
              Name
              <span className="absolute top-[-2px] left-[137px]"><Chevron dir="up" color="#666" size={9} weight={1} /></span>
            </div>
            <div className="w-[144px] border-r border-[#e0e0e0] pl-[6px]">Date modified</div>
            <div className="w-[120px] border-r border-[#e0e0e0] pl-[6px]">Type</div>
          </div>
          <div className="pt-[6px]">
            {files.map((f) => (
              <div key={f.name} className="flex h-[21px] items-center tracking-[-0.38px] whitespace-nowrap text-[#6d6d6d]">
                <div className="flex w-[278px] items-center gap-[3px] pl-[18px] text-black">
                  {f.kind === 'folder' ? <FolderIcon /> : f.kind === 'word' ? <WordFileIcon /> : <AccessFileIcon />}
                  <span className={f.kind === 'folder' ? 'pl-px' : ''}>{f.name}</span>
                </div>
                <div className="w-[144px] tracking-[-0.42px]">{f.date}</div>
                <div className={f.kind === 'access' ? 'tracking-[-0.2px]' : ''}>{f.type}</div>
              </div>
            ))}
          </div>
          <div className="mt-auto mb-px flex h-[15px] items-center bg-[#f0f0f0]">
            <div className="flex w-[17px] justify-center"><Chevron dir="left" color="#505050" size={9} weight={2} /></div>
            <div className="h-full flex-1 bg-[#cdcdcd]" />
          </div>
        </div>
      </div>
      <div className="flex flex-1 items-center pl-[14px] text-[#1e395b]">9 items</div>
    </div>
  )
}

/* ── Desktop icons ── */

function RecycleBinIcon() {
  return (
    <svg width="48" height="48" viewBox="0 0 48 48">
      <path d="M5 6l31-3 6 4-5 32-15 6-12-4z" fill="#c3d0da" />
      <path d="M5 6l17 4 20-3-6-4z" fill="#8fa9ba" stroke="#eef5f9" />
      <path d="M5 6l17 4v35l-12-4z" fill="#dbe6ee" opacity=".85" />
      <path d="M22 10l20-3-5 32-15 6z" fill="#a7b3bc" />
      <g stroke="#1676cf" strokeWidth="3.500" fill="none">
        <path d="M10.500 24l3-4.500 4 1.500M20.500 22l2 6-4.500 3M14.500 32l-4.500-1.500v-4" />
      </g>
    </svg>
  )
}

function VlcIcon() {
  return (
    <svg width="48" height="48" viewBox="0 0 48 48">
      <path d="M10 36h28l4 11H6z" fill="#ee7411" />
      <path d="M20.500 3c1-3 6-3 7 0l9 35c-4 4-21 4-25 0z" fill="#f58220" />
      <path d="M19 10h10l2.200 8H17z" fill="#ececec" />
      <path d="M14.500 26h19l2 8c-5 3-18 3-23 0z" fill="#e6e6e6" />
    </svg>
  )
}

function CCleanerIcon() {
  return (
    <svg width="48" height="48" viewBox="0 0 48 48">
      <path d="M47 11A22 22 0 1 0 47 38L38 31a10 10 0 1 1 0-13z" fill="#dc3a2a" />
      <path d="M47 11A22 22 0 0 0 10 13l9 6a12 12 0 0 1 19-1z" fill="#ee5b45" />
      <path d="M28 5l3 1-6 17-5-2z" fill="#244f7c" />
      <path d="M14 22c4-4 12-1 14 5l-3 4-13-5z" fill="#3d8cc8" />
      <path d="M10 25l17 5c0 7-4 12-9 15L0 33c5-1 8-4 10-8z" fill="#f3d6a0" />
    </svg>
  )
}

function EdgeIcon({ size = 48, id }: { size?: number; id: string }) {
  return (
    <svg width={size} height={size} viewBox="0 0 48 48">
      <defs>
        <linearGradient id={id} x1="0" y1="0" x2="1" y2=".4">
          <stop offset="0" stopColor="#2aa8e8" />
          <stop offset=".55" stopColor="#36c4c4" />
          <stop offset="1" stopColor="#5fdc62" />
        </linearGradient>
      </defs>
      <circle cx="24" cy="24" r="24" fill="#1168bf" />
      <path d="M0 22C2 8 12 0 25 0c13 0 23 9 23 20 0 8-6 12-13 12-5 0-8-2-8-4 0-1 2-2 2-5 0-5-5-10-13-10C8 13 2 17 0 22z" fill={`url(#${id})`} />
      <path d="M0 22c3-6 8-9 15-9 6 0 11 3 13 7-8-3-14 3-13 11 1 9 7 14 14 16C13 50-1 40 0 22z" fill="#1b8ad8" />
      <path d="M15 31c0 9 10 13 18 13 4 0 8-2 11-6-9 4-18 1-20-6-1-4 1-8 3-9-7-1-12 3-12 8z" fill="#0d4a96" />
    </svg>
  )
}

function AcrobatIcon() {
  return (
    <svg width="48" height="48" viewBox="0 0 48 48">
      <rect x="2" y="1" width="44" height="43" rx="7" fill="#b30b00" />
      <path d="M13 34c-3-1 1-6 8-8 7-3 18-4 17 0-1 4-10 0-15-6-3-4-4-10-1-10 4 0 2 7-1 13-2 5-5 12-8 11z" stroke="#fff" strokeWidth="2.500" fill="none" />
    </svg>
  )
}

function WordDocIcon() {
  return (
    <svg width="48" height="48" viewBox="0 0 48 48">
      <path d="M8 3h32v42H8z" fill="#fafafa" stroke="#d0d6de" />
      <path d="M24 19h14M24 24h14M24 29h14" stroke="#3b78c8" />
      <rect x="3" y="14" width="20" height="20" fill="#1f5bb5" stroke="#fff" />
      <path d="M7 18.500l2.500 11L13 20l3 9.500 3.500-11" stroke="#fff" strokeWidth="2.500" fill="none" />
    </svg>
  )
}

function ImageFileIcon() {
  return (
    <svg width="48" height="48" viewBox="0 0 48 48">
      <path d="M8 3h23l9 9v33H8z" fill="#f7f7f7" stroke="#d0d4d8" />
      <path d="M31 3v9h9z" fill="#dcdcdc" stroke="#c3c7cb" strokeWidth=".8" />
      <rect x="12.500" y="16.500" width="23" height="17" fill="#fff" stroke="#4d6076" />
      <rect x="14" y="18" width="20" height="14" fill="#7fb4e6" />
      <path d="M14 22c5-2 10 1 20-1v5H14z" fill="#e2eef7" />
      <path d="M14 23c6 3 12 4 20 4v3H14z" fill="#2b5b4c" />
      <path d="M14 29h20v3H14z" fill="#5e8fae" />
    </svg>
  )
}

function FirefoxIcon({ size = 48, id }: { size?: number; id: string }) {
  return (
    <svg width={size} height={size} viewBox="0 0 48 48">
      <defs>
        <linearGradient id={id} x1=".8" y1="0" x2=".2" y2="1">
          <stop offset="0" stopColor="#ffe640" />
          <stop offset=".45" stopColor="#ff8f2a" />
          <stop offset="1" stopColor="#f5225f" />
        </linearGradient>
      </defs>
      <path d="M30 0c3 5 7 8 10 12l1-3c3 3 6 8 6 14 1 13-9 24-22 24C10 47 1 36 2 23c1-5 3-8 5-12l3 4c2-2 3-3 6-3 3 0 4 1 7 1 0-6 3-9 7-13z" fill={`url(#${id})`} />
      <path d="M16 18c8-6 18-2 18 7 0 6-5 10-10 10-6 0-10-5-9-11z" fill="#7a3fe0" />
      <path d="M5 12c3-1 8 2 11 1 4-1 7 1 10 5-4 1-6 2-8 4-6-1-7 4-4 9-6-2-11-10-9-19z" fill="#ff9a26" />
    </svg>
  )
}

function ChromeIcon() {
  return (
    <svg width="48" height="48" viewBox="0 0 48 48">
      <path d="M3.200 12A24 24 0 0 1 44.800 12H24L13.600 30z" fill="#e33b2e" />
      <path d="M44.800 12A24 24 0 0 1 24 48L34.400 30 24 12z" fill="#fcc31e" />
      <path d="M3.200 12A24 24 0 0 0 24 48L34.400 30H13.600z" fill="#269a48" />
      <circle cx="24" cy="24" r="12" fill="#fff" />
      <circle cx="24" cy="24" r="9.800" fill="#2f7bea" />
    </svg>
  )
}

const shortcuts = [
  [
    { lines: ['Recycle Bin'], icon: <RecycleBinIcon />, link: false },
    { lines: ['CCleaner'], icon: <CCleanerIcon />, link: true },
    { lines: ['Adobe', 'Acrobat'], icon: <AcrobatIcon />, link: true },
    { lines: ['idnc.png'], icon: <ImageFileIcon />, link: false },
    { lines: ['Firefox'], icon: <FirefoxIcon id="ffDesk" />, link: true },
    { lines: ['Google', 'Chrome'], icon: <ChromeIcon />, link: true },
  ],
  [
    { lines: ['VLC media', 'player'], icon: <VlcIcon />, link: true },
    { lines: ['Microsoft', 'Edge'], icon: <EdgeIcon id="edgeDesk" />, link: true },
    { lines: ['bothis.rtf'], icon: <WordDocIcon />, link: false },
    { lines: ['holidayi.rtf'], icon: <WordDocIcon />, link: false },
    { lines: ['industri.png'], icon: <ImageFileIcon />, link: false },
    { lines: ['manuali.png'], icon: <ImageFileIcon />, link: false },
  ],
  [{ lines: [], icon: <ImageFileIcon />, link: false }],
]

function DesktopIcons() {
  return (
    <div className="-ml-px flex h-[680px] overflow-hidden text-white">
      {shortcuts.map((col, c) => (
        <div key={c} className="flex w-[75px] flex-col">
          {col.map((s, i) => (
            <div key={i} className="flex h-[108px] flex-col items-center pt-[7px]">
              <div className="relative h-12 w-12">
                {s.icon}
                {s.link && (
                  <svg width="13" height="13" viewBox="0 0 13 13" className="absolute bottom-0 left-0">
                    <rect x=".5" y=".5" width="12" height="12" fill="#f6f6f6" stroke="#cfcfcf" />
                    <path d="M3 11c0-4 1-6 4-6.500L4.500 2.500H11v6L9 6.500C6.500 7 6 8 6 11z" fill="#1c4c94" />
                  </svg>
                )}
              </div>
              <div className="pt-[3px] text-center leading-[15px] whitespace-nowrap [text-shadow:0_1px_2px_rgba(0,0,0,0.6)]">
                {s.lines.map((line) => <div key={line}>{line}</div>)}
              </div>
            </div>
          ))}
        </div>
      ))}
    </div>
  )
}

/* ── Watermark and taskbar ── */

function Watermark() {
  return (
    <div className="absolute top-[604px] left-[1036px]">
      <svg width="200" height="70" viewBox="0 0 200 70">
        <g fill="#cfdcf5" fillOpacity=".6" fontFamily="Roboto" fontSize="52" fontWeight="400">
          <text x="3" y="55" textLength="62" lengthAdjust="spacingAndGlyphs">ANY</text>
          <text x="133" y="55" textLength="62" lengthAdjust="spacingAndGlyphs">RUN</text>
        </g>
        <g fill="none" stroke="#d0daee" strokeOpacity=".65" strokeWidth="3">
          <path d="M83 7v59l44-29.500z" />
          <path d="M76 18v46h7M90 20v36l28-18" />
          <path d="M90 22l34 14" />
        </g>
      </svg>
    </div>
  )
}

function Flowers() {
  return (
    <svg width="78" height="38" viewBox="0 0 78 38">
      <path d="M0 38c8-7 24-6 38-6 16-3 28 0 40 1v5z" fill="#5d9248" />
      <path d="M34 38l-4-16M50 38l1-18M44 38c-6-4-6-8-6-10 4 2 7 5 8 10M56 38c1-7 4-9 8-11 0 5-2 8-6 11" stroke="#3f9a3c" strokeWidth="2" fill="#4aa845" />
      <path d="M15 19c-5 4-9 13-4 17h10c4-5 0-12-6-17z" fill="#7a54a6" />
      <path d="M15 19c-2 6-3 11-1 17h5c2-5 0-12-4-17z" fill="#5c3d86" />
      <path d="M22 14l5 3 4-3 4 3 5-2c0 7-3 13-9 13s-9-6-9-14z" fill="#f5a623" />
      <path d="M31 13l3 4c0 4-1 8-3 10-3-3-4-6-4-10z" fill="#fcc63c" />
      <path d="M38 7l6 2 6-6 6 5 8-3c0 13-4 22-13 22S38 18 38 7z" fill="#f7b21c" />
      <path d="M50 3l6 8c0 8-2 13-5 16-4-4-6-9-6-16z" fill="#ffd040" />
      <path d="M47 6l3-4 4 3-4 6z" fill="#e8781c" />
      <circle cx="65" cy="30" r="5" fill="#f59a2c" />
      <circle cx="65" cy="30" r="2.200" fill="#f8c878" />
    </svg>
  )
}

function Taskbar() {
  return (
    <div className="flex h-10 bg-linear-to-r from-[#001622] to-[#020718] text-white">
      <div className="flex w-12 items-center justify-center">
        <svg width="16" height="16" viewBox="0 0 16 16">
          <path d="M0 2.300L6.500 1.300v6.200H0zM7.400 1.200L16 0v7.500H7.400zM0 8.400h6.500v6.300L0 13.700zM7.400 8.400H16V16l-8.600-1.200z" fill="#fff" />
        </svg>
      </div>
      <div className="flex w-[288px] items-center border border-[#c9c9c9] bg-[#f2f2f2] pl-[11px] text-[#333]">
        <svg width="17" height="17" viewBox="0 0 17 17">
          <circle cx="10.500" cy="6.500" r="5.300" stroke="#222" strokeWidth="1.200" fill="none" />
          <path d="M6.700 10.300L.5 16.500" stroke="#222" strokeWidth="1.200" />
        </svg>
        <span className="ml-[11px] text-[15px] tracking-[-0.53px] whitespace-nowrap">Type here to search</span>
        <div className="ml-auto"><Flowers /></div>
      </div>
      <div className="flex w-12 items-center justify-center">
        <svg width="17" height="16" viewBox="0 0 17 16" fill="none" stroke="#fff" strokeWidth="1.200">
          <path d="M1 .5v2.500h10V.5M1 15.500V13h10v2.500M1.500 5.500h9v5h-9zM14.500 0v16" />
          <path d="M13 6h3v2h-3z" fill="#fff" stroke="none" />
        </svg>
      </div>
      <div className="ml-[3px] flex w-12 items-center justify-center"><EdgeIcon size={24} id="edgeBar" /></div>
      <div className="ml-px flex w-[45px] items-center justify-center border-b-2 border-[#76b9ed] bg-[#374650] pl-[2px]">
        <svg width="22" height="19" viewBox="0 0 23 20">
          <path d="M0 1h8l2 2h12v4H0z" fill="#e8a733" />
          <path d="M0 5h23v13H0z" fill="#fcd56b" />
          <path d="M4 20v-9h15v9h-4v-4H8v4z" fill="#3f8fd2" />
        </svg>
      </div>
      <div className="w-[3px] border-b-2 border-[#5d93bd] bg-[#24343e]" />
      <div className="ml-px flex w-12 items-center justify-center"><FirefoxIcon size={24} id="ffBar" /></div>
      <div className="ml-auto flex items-center">
        <svg width="12" height="7" viewBox="0 0 12 7"><path d="M.5 6.500L6 1l5.500 5.500" stroke="#fff" strokeWidth="1.200" fill="none" /></svg>
        <svg width="12" height="18" viewBox="0 0 12 18" className="ml-[14px]" fill="none" stroke="#fff">
          <rect x=".8" y="5.500" width="7" height="7.500" rx="1.500" />
          <path d="M8 8l3-1.500v6L8 11M2 3c2-2 5-2 7 0M2 15.500c2 2 5 2 7 0" />
        </svg>
        <svg width="17" height="14" viewBox="0 0 17 14" className="ml-[9px]" fill="none" stroke="#fff">
          <path d="M5 2.500h11v7H4V7M8 12.500h5M10.500 10v2" />
          <path d="M.5.500h4v4h-4zM2.500 4.500V12" />
        </svg>
        <svg width="17" height="14" viewBox="0 0 17 14" className="ml-[7px]" fill="none" stroke="#fff">
          <path d="M.5 5h2.500l3-3.500v11L3 9H.5zM8.500 5c1 1 1 3 0 4M11 3.200c2 2 2 5.500 0 7.500M13.500 1.200c3 3.500 3 8 0 11.500" />
        </svg>
        <div className="ml-[4px] w-[62px] text-center leading-[18px] tracking-[-0.35px] whitespace-nowrap">
          <div>5:02 PM</div>
          <div>9/3/2025</div>
        </div>
        <svg width="17" height="16" viewBox="0 0 17 16" className="ml-[13px]">
          <path d="M1 1h15v11.500h-5L8.500 15 6 12.500H1z" stroke="#fff" strokeWidth="1.200" fill="none" />
        </svg>
        <div className="ml-[19px] h-10 w-px bg-[#5a6470]" />
        <div className="w-1" />
      </div>
    </div>
  )
}

export default function App() {
  return (
    <div className="relative h-[720px] w-[1280px] overflow-hidden bg-[linear-gradient(97deg,#00a9fa_0%,#00b2ff_22%,#0a96ec_45%,#0068da_68%,#0a4ebb_85%,#123f9c_100%)] font-['Open_Sans','Noto_Sans',sans-serif] text-[12px] leading-[16px] tracking-[-0.3px]">
      <DesktopIcons />
      <Taskbar />
      <QuickAccessWindow />
      <DocumentsWindow />
      <div className="absolute top-[629px] right-[5px] text-right leading-[17px] text-white">
        <div>Test Mode</div>
        <div className="tracking-[-0.4px]">Windows 10 Pro</div>
        <div className="tracking-[-0.56px]">Build 19041.vb_release.191206-1406</div>
      </div>
      <Watermark />
    </div>
  )
}
